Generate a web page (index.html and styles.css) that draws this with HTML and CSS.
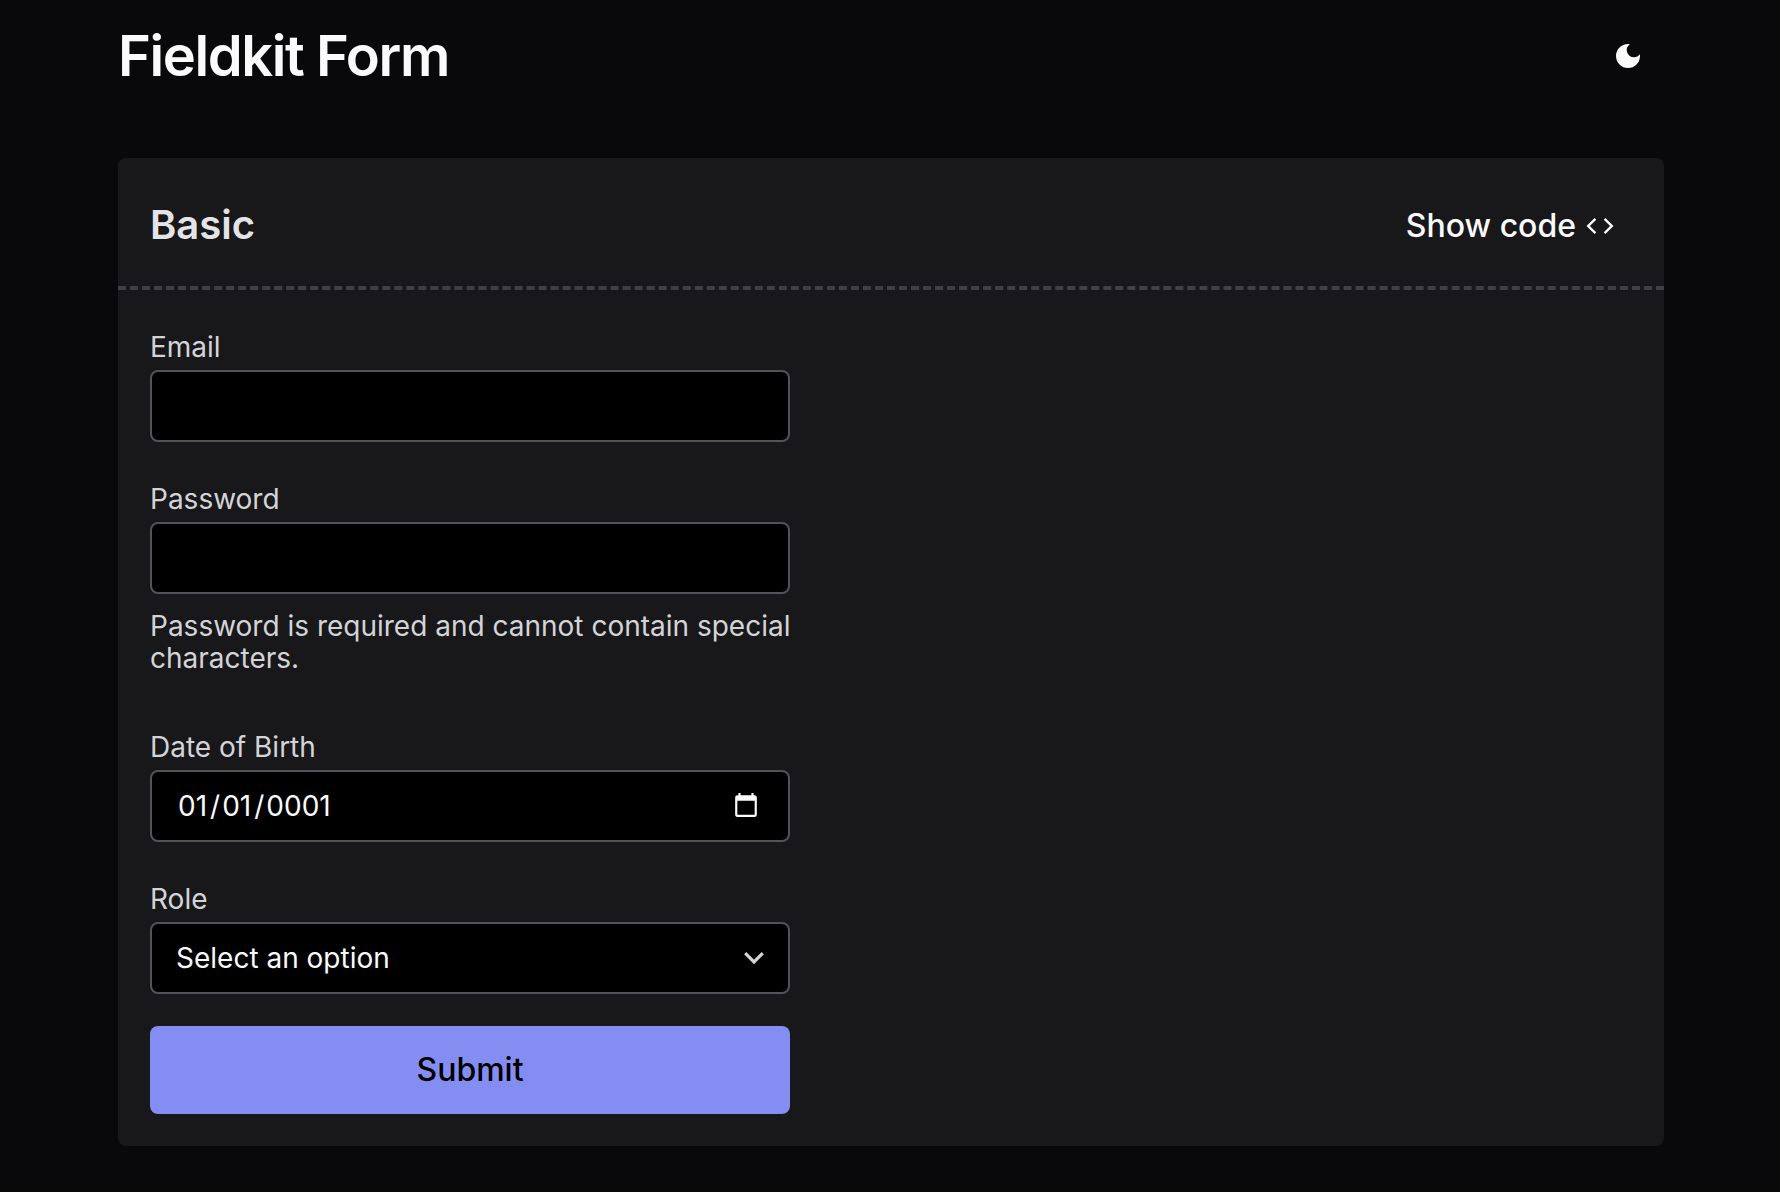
FILE: index.html
```html
<!DOCTYPE html>
<html lang="en">
<head>
  <meta charset="utf-8">
  <meta name="viewport" content="width=device-width, initial-scale=1">
  <title>Fieldkit Form</title>
  <link rel="stylesheet" href="styles.css">
</head>
<body>
  <div class="page">
    <header class="topbar">
      <h1 class="title">Fieldkit Form</h1>
      <button class="icon-button" type="button" aria-label="Toggle theme">
        <svg class="icon" viewBox="0 0 24 24" fill="currentColor" aria-hidden="true"><path d="M12 3a9 9 0 1 0 9 9c0-.46-.04-.92-.1-1.36a5.389 5.389 0 0 1-4.4 2.26 5.403 5.403 0 0 1-3.14-9.8c-.44-.06-.9-.1-1.36-.1z"/></svg>
      </button>
    </header>
    <main class="card">
      <div class="card-header">
        <h2 class="card-title">Basic</h2>
        <button class="code-button" type="button">Show code
          <svg class="icon" viewBox="0 0 32 32" fill="none" stroke="currentColor" stroke-width="2.4" aria-hidden="true"><path d="M11.4 8.8 4.2 16l7.2 7.2M20.6 8.8l7.2 7.2-7.2 7.2"/></svg>
        </button>
      </div>
      <form class="form">
        <div class="field">
          <label class="label" for="email">Email</label>
          <input class="control" id="email" name="email" type="email">
        </div>
        <div class="field">
          <label class="label" for="password">Password</label>
          <input class="control" id="password" name="password" type="password" aria-describedby="password-help">
          <p class="help" id="password-help">Password is required and cannot contain special characters.</p>
        </div>
        <div class="field">
          <label class="label" for="dob">Date of Birth</label>
          <input class="control date-control" id="dob" name="dob" type="date" value="0001-01-01">
        </div>
        <div class="field">
          <label class="label" for="role">Role</label>
          <div class="select">
            <select class="control select-control" id="role" name="role">
              <option>Select an option</option>
            </select>
            <svg class="chevron" viewBox="0 0 20 12" fill="none" stroke="currentColor" stroke-width="3.2" aria-hidden="true"><path d="M1.2 1.2 10 10l8.8-8.8"/></svg>
          </div>
        </div>
        <button class="submit" type="submit">Submit</button>
      </form>
    </main>
  </div>
</body>
</html>
```
FILE: styles.css
```css
*,
*::before,
*::after {
  box-sizing: border-box;
}

body {
  margin: 0;
  background: #09090b;
  color: #fafafa;
  color-scheme: dark;
  font-family: Inter, "Liberation Sans", sans-serif;
}

h1,
h2,
p {
  margin: 0;
}

button {
  border: 0;
  background: none;
  color: inherit;
  font: inherit;
  cursor: pointer;
}

.page {
  padding: 0 116px 46px 118px;
}

.topbar {
  display: flex;
  align-items: center;
  justify-content: space-between;
  height: 112px;
  margin-bottom: 46px;
}

.title {
  font-size: 56px;
  line-height: 64px;
  font-weight: 600;
  letter-spacing: -0.025em;
}

.icon {
  display: block;
  width: 32px;
  height: 32px;
}

.icon-button {
  padding: 20px;
}

.card {
  border-radius: 8px;
  background: #18181b;
}

.card-header {
  display: flex;
  align-items: center;
  justify-content: space-between;
  padding: 35px 32px 29px;
  border-bottom: 4px dashed #3f3f46;
}

.card-title {
  color: #e4e4e7;
  font-size: 40px;
  line-height: 64px;
  font-weight: 600;
}

.code-button {
  display: flex;
  align-items: center;
  gap: 8px;
  padding: 2px 16px 0;
  font-size: 32px;
  line-height: 48px;
  font-weight: 500;
}

.form {
  display: flex;
  flex-direction: column;
  gap: 32px;
  max-width: 704px;
  padding: 32px;
}

.field {
  display: flex;
  flex-direction: column;
  gap: 7px;
  padding-top: 9px;
}

.label,
.help {
  color: #d4d4d8;
  font-size: 28px;
  line-height: 32px;
}

.help {
  margin-right: -8px;
  padding: 9px 0 16px;
}

.control {
  width: 100%;
  height: 72px;
  margin: 0;
  padding: 0 24px;
  border: 2px solid #52525b;
  border-radius: 8px;
  background: #000;
  color: #fafafa;
  font-family: inherit;
  font-size: 28px;
}

.date-control {
  padding-right: 26px;
}

.date-control::-webkit-datetime-edit-month-field,
.date-control::-webkit-datetime-edit-day-field,
.date-control::-webkit-datetime-edit-year-field {
  padding: 0 3px 0 2px;
}

.select {
  position: relative;
}

.select-control {
  appearance: none;
}

.chevron {
  position: absolute;
  top: 30px;
  right: 26px;
  width: 20px;
  height: 12px;
  color: #d4d4d8;
  pointer-events: none;
}

.submit {
  height: 88px;
  padding: 0 0 2px;
  border-radius: 8px;
  background: #848ef2;
  color: #000;
  font-size: 32px;
  font-weight: 500;
}
```
